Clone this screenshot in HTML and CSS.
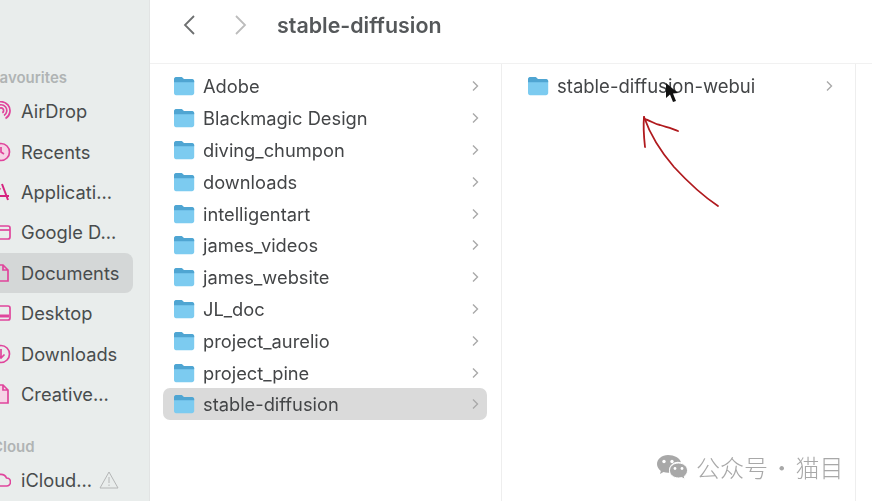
FILE: index.html
```html
<!DOCTYPE html>
<html lang="en">
<head>
    <meta charset="UTF-8">
    <meta name="viewport" content="width=device-width, initial-scale=1.0">
    <title>stable-diffusion</title>
    <link rel="stylesheet" href="styles.css">
</head>
<body>
    <svg class="defs" width="0" height="0">
        <symbol id="folder" viewBox="0 0 22 20">
            <path d="M1 3.5C1 2 2 1 3.2 1h4.600c1 0 1.500.4 2.200 1.200l.8.800H19c1.200 0 2.200 1 2.200 2.200V17c0 1.200-1 2.200-2.200 2.200H3c-1.200 0-2-1-2-2.200z" fill="#7ccbf0"/>
            <path d="M1 3.500C1 2 2 1 3.200 1h4.600c1 0 1.500.4 2.200 1.200l.8.800H19c1.200 0 2.200 1 2.200 2.200v1H1z" fill="#4fa5d2"/>
        </symbol>
        <symbol id="chevron" viewBox="0 0 8 12">
            <path d="M2 1.500 6.500 6 2 10.500" fill="none" stroke="#a9a9a9" stroke-width="1.400"/>
        </symbol>
    </svg>

    <div class="finder">
        <aside class="sidebar">
            <div class="side-label">Favourites</div>
            <ul class="side-list">
                <li class="side-item">
                    <svg class="side-icon" viewBox="0 0 20 20"><path d="M5.500 17.500a9 9 0 1 1 9 0M7 14.500a5.800 5.800 0 1 1 6 0M8.700 11.800a2.600 2.600 0 1 1 2.600 0" /></svg>
                    <span>AirDrop</span>
                </li>
                <li class="side-item">
                    <svg class="side-icon" viewBox="0 0 20 20"><circle class="tint" cx="10" cy="10" r="8.500"/><path d="M10 5v5l3 2"/></svg>
                    <span>Recents</span>
                </li>
                <li class="side-item">
                    <svg class="side-icon strong" viewBox="0 0 20 20"><path d="M11 2 17 18M9 6 3 18M2 14h16"/></svg>
                    <span>Applicati...</span>
                </li>
                <li class="side-item">
                    <svg class="side-icon" viewBox="0 0 20 20"><rect x="1" y="4" width="18" height="13" rx="2"/><path d="M1 8h18"/></svg>
                    <span>Google D...</span>
                </li>
                <li class="side-item selected">
                    <svg class="side-icon" viewBox="0 0 20 20"><path d="M3 2h9l5 5v11H3zM12 2v5h5"/></svg>
                    <span>Documents</span>
                </li>
                <li class="side-item">
                    <svg class="side-icon" viewBox="0 0 20 20"><rect x="1" y="3" width="18" height="14" rx="2"/><path class="thick" d="M2 13h16"/></svg>
                    <span>Desktop</span>
                </li>
                <li class="side-item">
                    <svg class="side-icon" viewBox="0 0 20 20"><circle cx="10" cy="10" r="8.500"/><path d="M10 5v9M6.500 10.500 10 14l3.500-3.500"/></svg>
                    <span>Downloads</span>
                </li>
                <li class="side-item">
                    <svg class="side-icon" viewBox="0 0 20 20"><path class="tint" d="M3 1h9l5 5v13H3zM12 1v5h5"/></svg>
                    <span>Creative...</span>
                </li>
            </ul>
            <div class="side-label second">iCloud</div>
            <ul class="side-list">
                <li class="side-item">
                    <svg class="side-icon" viewBox="0 0 20 20"><path d="M5 16a4 4 0 0 1-.500-8 6 6 0 0 1 11 0 4 4 0 0 1 0 8z"/></svg>
                    <span>iCloud...</span>
                    <svg class="warn" viewBox="0 0 20 18"><path d="M10 1 19 17H1zM10 6v6M10 13.500v1.500"/></svg>
                </li>
            </ul>
        </aside>

        <main class="content">
            <header class="toolbar">
                <svg class="nav-arrow" viewBox="0 0 14 22"><path d="M12 2 3 11l9 9"/></svg>
                <svg class="nav-arrow off" viewBox="0 0 14 22"><path d="M2 2l9 9-9 9"/></svg>
                <h1 class="title">stable-diffusion</h1>
            </header>

            <div class="columns">
                <ul class="column first">
                    <li class="row"><svg class="folder"><use href="#folder"/></svg><span class="name">Adobe</span><svg class="chev"><use href="#chevron"/></svg></li>
                    <li class="row"><svg class="folder"><use href="#folder"/></svg><span class="name">Blackmagic Design</span><svg class="chev"><use href="#chevron"/></svg></li>
                    <li class="row"><svg class="folder"><use href="#folder"/></svg><span class="name">diving_chumpon</span><svg class="chev"><use href="#chevron"/></svg></li>
                    <li class="row"><svg class="folder"><use href="#folder"/></svg><span class="name">downloads</span><svg class="chev"><use href="#chevron"/></svg></li>
                    <li class="row"><svg class="folder"><use href="#folder"/></svg><span class="name">intelligentart</span><svg class="chev"><use href="#chevron"/></svg></li>
                    <li class="row"><svg class="folder"><use href="#folder"/></svg><span class="name">james_videos</span><svg class="chev"><use href="#chevron"/></svg></li>
                    <li class="row"><svg class="folder"><use href="#folder"/></svg><span class="name">james_website</span><svg class="chev"><use href="#chevron"/></svg></li>
                    <li class="row"><svg class="folder"><use href="#folder"/></svg><span class="name">JL_doc</span><svg class="chev"><use href="#chevron"/></svg></li>
                    <li class="row"><svg class="folder"><use href="#folder"/></svg><span class="name">project_aurelio</span><svg class="chev"><use href="#chevron"/></svg></li>
                    <li class="row"><svg class="folder"><use href="#folder"/></svg><span class="name">project_pine</span><svg class="chev"><use href="#chevron"/></svg></li>
                    <li class="row selected"><svg class="folder"><use href="#folder"/></svg><span class="name">stable-diffusion</span><svg class="chev"><use href="#chevron"/></svg></li>
                </ul>
                <ul class="column second">
                    <li class="row"><svg class="folder"><use href="#folder"/></svg><span class="name">stable-diffusion-webui</span><svg class="chev"><use href="#chevron"/></svg></li>
                </ul>
                <div class="column third"></div>
            </div>
        </main>
    </div>

    <!-- red arrow drawn over the video, and the mouse pointer -->
    <svg class="scribble" viewBox="0 0 872 501">
        <path d="M718 206C700 194 686 180 674 167 661 152 650 134 644 117" />
        <path d="M644 117C643 128 644 138 645 147" />
        <path d="M644 119C650 120 654 124 660 125 666 127 672 128 678 131" />
    </svg>
    <svg class="pointer" viewBox="0 0 14 22"><path d="M1 1 1 16 5 12.500 8 20 11 19 8 11.500 13 11z"/></svg>

    <div class="watermark">
        <svg class="wechat" viewBox="0 0 32 26">
            <path d="M12 1C5.900 1 1 5 1 10c0 2.800 1.500 5.200 3.800 6.900L4 20l3.500-1.900c1.400.4 2.900.7 4.500.7.500 0 .9 0 1.300-.1A9 9 0 0 1 25 8.200C23.700 4 18.300 1 12 1z"/>
            <path d="M22.500 9C17.300 9 13.500 12.300 13.500 16.500s3.800 7.500 9 7.500c1.100 0 2.200-.2 3.200-.5L29 25.500l-.8-3.100c2.100-1.400 3.300-3.500 3.300-5.900C31.500 12.300 27.700 9 22.500 9z" stroke="#fff" stroke-width="1"/>
            <circle cx="8" cy="7.500" r="1.700" fill="#fff"/><circle cx="16" cy="7.500" r="1.700" fill="#fff"/>
            <circle cx="19" cy="14.500" r="1.400" fill="#fff"/><circle cx="26" cy="14.500" r="1.400" fill="#fff"/>
        </svg>
        <span class="mark-text">公众号 · 猫目</span>
    </div>
</body>
</html>
```

FILE: styles.css
```css
* {
    box-sizing: border-box;
}
html, body {
    margin: 0;
    height: 100%;
    overflow: hidden;
}
body {
    position: relative;
    font-family: Inter, "Liberation Sans", sans-serif;
    background: #fff;
    color: #4a4d4e;
}
ul {
    list-style: none;
    margin: 0;
    padding: 0;
}
.defs {
    position: absolute;
}
.finder {
    display: flex;
    height: 100%;
    filter: blur(0.5px);
}

/* sidebar */
.sidebar {
    width: 150px;
    flex-shrink: 0;
    overflow: hidden;
    padding-top: 69px;
    background: #e9edec;
    border-right: 1px solid #e2e4e4;
}
.side-label {
    height: 18px;
    margin-left: -9px;
    margin-bottom: 4px;
    font-size: 15px;
    font-weight: 600;
    line-height: 18px;
    color: #b0b4b4;
}
.side-label.second {
    margin-top: 24px;
    margin-left: -12px;
}
.side-item {
    display: flex;
    align-items: center;
    gap: 10px;
    width: 142px;
    height: 40.4px;
    margin-left: -9px;
    font-size: 18.300px;
    color: #484c4d;
    white-space: nowrap;
}
.side-item.selected {
    background: #d4d7d7;
    border-radius: 8px;
}
.side-icon {
    width: 20px;
    height: 20px;
    flex-shrink: 0;
    fill: none;
    stroke: #e0459c;
    stroke-width: 1.700;
}
.side-icon.strong {
    stroke: #d6247f;
    stroke-width: 2;
}
.side-icon .thick {
    stroke-width: 3;
}
.side-icon .tint {
    fill: #f6d3e6;
}
.warn {
    width: 20px;
    height: 18px;
    margin-left: -3px;
    fill: none;
    stroke: #b4b6b6;
    stroke-width: 1;
}

/* main area */
.content {
    flex: 1;
    display: flex;
    flex-direction: column;
    min-width: 0;
}
.toolbar {
    display: flex;
    align-items: center;
    height: 64px;
    padding: 0 0 14px 32px;
    border-bottom: 1px solid #f1f1f1;
}
.nav-arrow {
    width: 14px;
    height: 22px;
    margin-right: 38px;
    flex-shrink: 0;
    fill: none;
    stroke: #6d6f70;
    stroke-width: 1.800;
}
.nav-arrow.off {
    margin-right: 29px;
    stroke: #bcbcbc;
}
.title {
    margin: 0;
    font-size: 21.400px;
    font-weight: 600;
    color: #55585a;
}
.columns {
    flex: 1;
    display: flex;
}
.column {
    flex-shrink: 0;
    padding: 6.500px 14px 0 13px;
    border-right: 1px solid #eeeeee;
}
.column.first {
    width: 352px;
}
.column.second {
    width: 354px;
    padding-left: 15px;
}
.column.third {
    flex: 1;
    padding: 0;
    border-right: none;
}
.row {
    display: flex;
    align-items: center;
    height: 31.8px;
    padding: 0 8px 0 10px;
    font-size: 18.300px;
    color: #434547;
}
.second .row {
    font-size: 18.500px;
}
.row.selected {
    background: #dadada;
    border-radius: 7px;
}
.folder {
    width: 22px;
    height: 20px;
    margin-right: 8px;
    flex-shrink: 0;
}
.name {
    flex: 1;
    white-space: nowrap;
}
.chev {
    width: 8px;
    height: 12px;
}

/* things on top of the window */
.scribble {
    position: absolute;
    left: 0;
    top: 0;
    width: 872px;
    height: 501px;
    fill: none;
    stroke: #b01a1e;
    stroke-width: 1.800;
    stroke-linecap: round;
    pointer-events: none;
}
.pointer {
    position: absolute;
    left: 665px;
    top: 82px;
    width: 14px;
    height: 22px;
    fill: #111;
}
.watermark {
    position: absolute;
    left: 656px;
    top: 452px;
    display: flex;
    align-items: center;
    gap: 8px;
    font-family: "Noto Sans CJK SC", sans-serif;
    font-size: 24px;
    font-weight: 300;
    line-height: 30px;
    color: #a8a8a8;
    white-space: nowrap;
}
.mark-text {
    word-spacing: -3.500px;
}
.wechat {
    width: 32px;
    height: 26px;
    fill: #a8a8a8;
}
```
